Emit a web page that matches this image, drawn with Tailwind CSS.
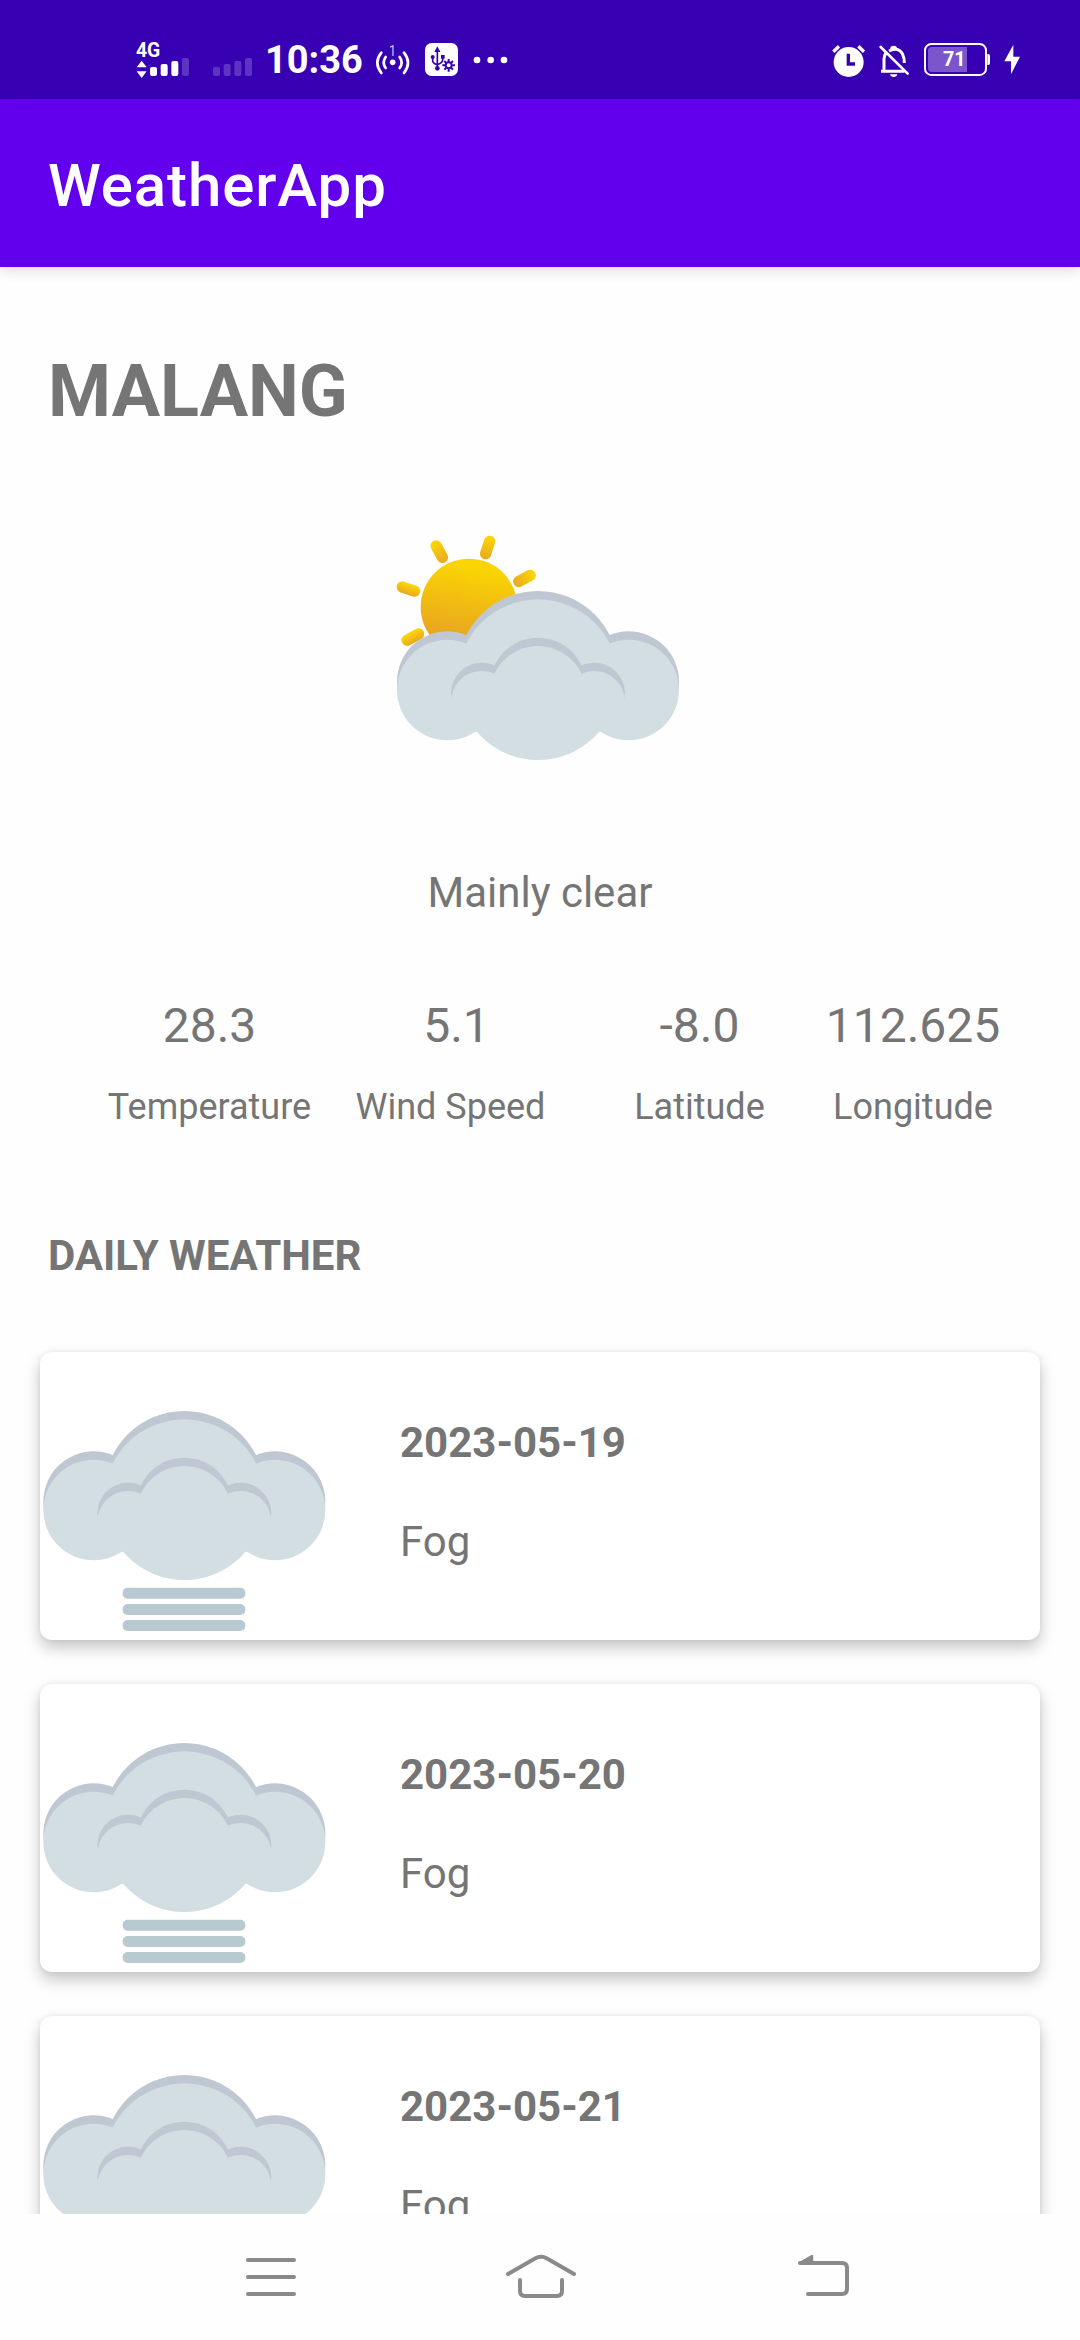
<!DOCTYPE html>
<html lang="en">
<head>
<meta charset="utf-8">
<title>WeatherApp</title>
<script src="https://cdn.jsdelivr.net/npm/@tailwindcss/browser@4"></script>
</head>
<body class="flex h-[2340px] w-[1080px] flex-col overflow-hidden bg-[#fefefe] font-['Roboto',sans-serif] text-[#757575]">

<!-- Shared cloud artwork -->
<svg class="hidden">
  <defs>
    <g id="cloud">
      <g fill="#bfc7d3">
        <circle cx="232" cy="515" r="151"/><circle cx="504" cy="484" r="241"/><circle cx="776" cy="515" r="151"/>
      </g>
      <g fill="#d3dee2">
        <circle cx="232" cy="540" r="151"/><circle cx="504" cy="509" r="241"/><circle cx="776" cy="540" r="151"/>
      </g>
      <g fill="#bfc7d3">
        <circle cx="335" cy="550" r="92"/><circle cx="504" cy="527" r="144"/><circle cx="673" cy="550" r="92"/>
      </g>
      <g fill="#d3dee2">
        <circle cx="335" cy="575" r="92"/><circle cx="504" cy="552" r="144"/><circle cx="673" cy="575" r="92"/>
      </g>
    </g>
    <g id="fog">
      <use href="#cloud"/>
      <g fill="#b8c9d1">
        <rect x="319" y="773" width="368" height="33" rx="15"/>
        <rect x="319" y="822" width="368" height="33" rx="15"/>
        <rect x="319" y="870" width="368" height="33" rx="15"/>
      </g>
    </g>
  </defs>
</svg>

<!-- Status bar -->
<header class="flex h-[99px] shrink-0 items-start bg-[#3700b3] pt-5 pl-[134px] text-white">
  <svg class="h-[90px] w-[122px] shrink-0" viewBox="72 0 366 270" fill="#fff">
    <text x="78" y="110" font-family="Roboto" font-weight="700" font-size="61" textLength="73" lengthAdjust="spacingAndGlyphs">4G</text>
    <path d="M95 122l15 20H80zM95 174l15-20H80z"/>
    <rect x="120" y="141" width="21" height="27" rx="6"/>
    <rect x="152" y="132" width="21" height="36" rx="6"/>
    <rect x="184" y="123" width="21" height="45" rx="6"/>
    <g fill="#5f33c2">
      <rect x="216" y="114" width="21" height="54" rx="6"/>
      <rect x="309" y="141" width="21" height="27" rx="6"/>
      <rect x="341" y="132" width="21" height="36" rx="6"/>
      <rect x="373" y="123" width="21" height="45" rx="6"/>
      <rect x="405" y="114" width="21" height="54" rx="6"/>
    </g>
  </svg>
  <div class="mt-[17px] ml-[9px] w-[110px] text-[38px] leading-[46px] font-bold">10:36</div>
  <svg class="h-[90px] w-[35px] shrink-0" viewBox="795 0 105 270" fill="none" stroke="#fff" stroke-width="8" stroke-linecap="round">
    <circle cx="848" cy="127" r="8.500" fill="#fff" stroke="none"/>
    <path d="M827 111q-12 17 0 33M869 111q12 17 0 33M814 98q-24 30 0 61M882 98q24 30 0 61"/>
    <text x="837" y="109" font-family="Roboto" font-size="46" textLength="21" lengthAdjust="spacingAndGlyphs" fill="#d4c8ef" stroke="none">1</text>
  </svg>
  <svg class="ml-[15px] h-[90px] w-[33px] shrink-0" viewBox="945 0 99 270">
    <rect x="945" y="69" width="99" height="99" rx="20" fill="#fff"/>
    <g fill="none" stroke="#3700b3" stroke-width="5">
      <path d="M982 92v52M968 112v10q0 8 14 12M998 112v8q0 8-16 14"/>
      <circle cx="1016" cy="136" r="9" stroke-width="6"/>
      <path d="M1016 117v8M1016 147v8M997 136h8M1027 136h8M1003 123l5 5M1024 144l5 5M1029 123l-5 5M1008 144l-5 5" stroke-width="6"/>
    </g>
    <g fill="#3700b3"><path d="M982 79l9 17h-18z"/><circle cx="982" cy="145" r="7"/><circle cx="968" cy="111" r="6"/><path d="M993 105h11v11h-11z"/></g>
  </svg>
  <svg class="ml-[15px] h-[90px] w-[36px] shrink-0" viewBox="1089 0 108 270" fill="#fff">
    <circle cx="1101" cy="120" r="10"/><circle cx="1142" cy="120" r="10"/><circle cx="1182" cy="120" r="10"/>
  </svg>
  <svg class="ml-[322px] h-[90px] w-[35px] shrink-0" viewBox="93 0 105 270">
    <circle cx="146" cy="126" r="45" fill="#fff"/>
    <path d="M100 95l17-16M192 95l-17-16" stroke="#fff" stroke-width="10"/>
    <path d="M145 101v31h20" fill="none" stroke="#3700b3" stroke-width="10"/>
  </svg>
  <svg class="ml-3 h-[90px] w-[32px] shrink-0" viewBox="231 0 96 270" fill="none" stroke="#fff" stroke-width="9">
    <path d="M240 154h70M249 154v-37q0-10 6-18M264 93q28-14 41 10q5 10 5 26" />
    <path d="M239 81l81 80" stroke-width="8" stroke-linecap="round"/>
    <path d="M267 163h22q-2 8-11 8t-11-8zM268 90v-5q0-8 10-8t10 8v5z" fill="#fff" stroke="none"/>
  </svg>
  <svg class="ml-[13px] h-[90px] w-[68px] shrink-0" viewBox="363 0 204 270">
    <rect x="369" y="72" width="183" height="93" rx="19" fill="none" stroke="#fff" stroke-width="6"/>
    <path d="M390 81h105v75H390q-12 0-12-12V93q0-12 12-12z" fill="#7a55cb"/>
    <path d="M556 102h3q5 0 5 6v21q0 6-5 6h-3z" fill="#fff"/>
    <text x="423" y="137" font-family="Roboto" font-weight="700" font-size="62" textLength="68" lengthAdjust="spacingAndGlyphs" fill="#fff">71</text>
  </svg>
  <svg class="ml-[12px] h-[90px] w-[18px] shrink-0" viewBox="603 0 54 270" fill="#fff">
    <path d="M634 74l-27 50h20v39l27-53h-20z"/>
  </svg>
</header>

<!-- App bar -->
<div class="relative z-10 flex h-[168px] shrink-0 items-center bg-[#6200ee] pt-[5px] pl-12 shadow-[0_4px_12px_rgba(0,0,0,0.12)]">
  <h1 class="text-[60px] leading-[70px] font-medium tracking-[0.9px] text-white">WeatherApp</h1>
</div>

<main class="flex h-[1947px] shrink-0 flex-col overflow-hidden pt-[83px]">
  <h2 class="pl-12 text-[72px] leading-[84px] font-bold">MALANG</h2>

  <svg class="mt-[76px] h-[270px] w-[340px] shrink-0 self-center" viewBox="0 0 1020 810">
    <defs>
      <linearGradient id="sun" x1="0.55" y1="0" x2="0.42" y2="0.8"><stop offset="0.1" stop-color="#fad503"/><stop offset="1" stop-color="#e9a71f"/></linearGradient>
      <linearGradient id="ray" x1="0.5" y1="0" x2="0.5" y2="1"><stop offset="0.1" stop-color="#fad503"/><stop offset="1" stop-color="#e9a822"/></linearGradient>
    </defs>
    <circle cx="297" cy="291" r="145" fill="url(#sun)"/>
    <g fill="url(#ray)">
      <rect x="191" y="88" width="34" height="73" rx="17" transform="rotate(-29 208 125)"/>
      <rect x="336" y="76" width="34" height="73" rx="17" transform="rotate(18 353 112)"/>
      <rect x="447" y="169" width="34" height="73" rx="17" transform="rotate(62 464 205)"/>
      <rect x="79" y="220" width="73" height="34" rx="17" transform="rotate(18 115 237)"/>
      <rect x="92" y="364" width="73" height="34" rx="17" transform="rotate(-28 129 381)"/>
    </g>
    <use href="#cloud"/>
  </svg>
  <p class="mt-[89px] text-center text-[42px] leading-[48px]">Mainly clear</p>

  <dl class="mt-[81px] grid grid-cols-[241px_241px_257px_170px] pl-[89px] text-center whitespace-nowrap">
    <div class="flex flex-col-reverse items-center gap-8"><dt class="text-[36px] leading-[42px]">Temperature</dt><dd class="text-[48px] leading-[56px]">28.3</dd></div>
    <div class="flex flex-col-reverse items-center gap-8"><dt class="text-[36px] leading-[42px]">Wind Speed</dt><dd class="pl-3 text-[48px] leading-[56px]">5.1</dd></div>
    <div class="flex flex-col-reverse items-center gap-8"><dt class="text-[36px] leading-[42px]">Latitude</dt><dd class="text-[48px] leading-[56px]">-8.0</dd></div>
    <div class="flex flex-col-reverse items-center gap-8"><dt class="text-[36px] leading-[42px]">Longitude</dt><dd class="text-[48px] leading-[56px]">112.625</dd></div>
  </dl>

  <h3 class="mt-[104px] pl-12 text-[42px] leading-[48px] font-bold">DAILY WEATHER</h3>

  <ul class="mt-[72px] flex flex-col gap-11 px-10">
    <li class="flex h-72 shrink-0 rounded-[12px] bg-white shadow-[0_8px_16px_rgba(0,0,0,0.22),0_0_5px_rgba(0,0,0,0.07)]">
      <svg class="h-72 w-[290px] shrink-0" viewBox="71 66 870 864"><use href="#fog"/></svg>
      <div class="ml-[70px] flex flex-col gap-[51px] pt-[67px] text-[42px] leading-[48px]"><p class="font-bold">2023-05-19</p><p>Fog</p></div>
    </li>
    <li class="flex h-72 shrink-0 rounded-[12px] bg-white shadow-[0_8px_16px_rgba(0,0,0,0.22),0_0_5px_rgba(0,0,0,0.07)]">
      <svg class="h-72 w-[290px] shrink-0" viewBox="71 66 870 864"><use href="#fog"/></svg>
      <div class="ml-[70px] flex flex-col gap-[51px] pt-[67px] text-[42px] leading-[48px]"><p class="font-bold">2023-05-20</p><p>Fog</p></div>
    </li>
    <li class="flex h-72 shrink-0 rounded-[12px] bg-white shadow-[0_8px_16px_rgba(0,0,0,0.22),0_0_5px_rgba(0,0,0,0.07)]">
      <svg class="h-72 w-[290px] shrink-0" viewBox="71 66 870 864"><use href="#fog"/></svg>
      <div class="ml-[70px] flex flex-col gap-[51px] pt-[67px] text-[42px] leading-[48px]"><p class="font-bold">2023-05-21</p><p>Fog</p></div>
    </li>
  </ul>
</main>

<!-- System navigation -->
<nav class="flex h-[126px] shrink-0 bg-[#fefefe] pt-9 pl-[241px]">
  <svg class="h-[54px] w-[60px]" viewBox="241 2250 60 54" stroke="#8a8a8a" stroke-width="4" stroke-linecap="round"><path d="M248 2260h46M248 2277h46M248 2294h46"/></svg>
  <svg class="ml-[200px] h-[54px] w-[80px]" viewBox="501 2250 80 54" fill="none" stroke="#8a8a8a" stroke-width="4" stroke-linecap="round"><path d="M508 2274l27-15.500q6-3.500 12 0l27 15.500M520 2280v11q0 5 5 5h32q5 0 5-5v-11"/></svg>
  <svg class="ml-[212px] h-[54px] w-[62px]" viewBox="793 2250 62 54" fill="none" stroke="#8a8a8a" stroke-width="4" stroke-linecap="round"><path d="M800 2263h42q5 0 5 5v21q0 5-5 5h-34"/><path d="M800 2263l12-7v7z" stroke-width="2.500" stroke-linejoin="round" fill="#8a8a8a"/></svg>
</nav>
</body>
</html>
